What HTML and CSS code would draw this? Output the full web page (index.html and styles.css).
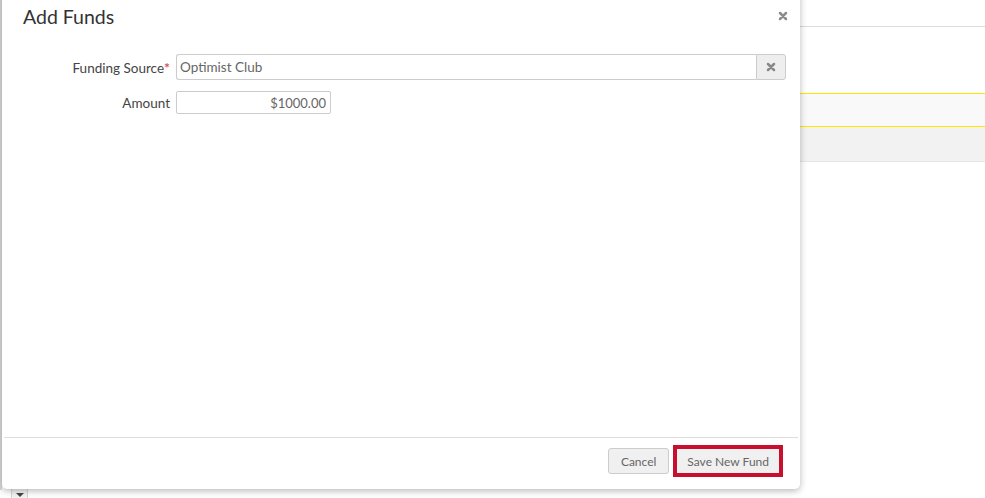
FILE: index.html
```html
<!DOCTYPE html>
<html lang="en">
<head>
    <meta charset="UTF-8">
    <title>Add Funds</title>
    <link rel="stylesheet" href="styles.css">
</head>
<body>
    <div class="backdrop">
        <div class="bar-top"></div>
        <div class="row-spacer"></div>
        <div class="row-hilite"></div>
        <div class="row-grey"></div>
    </div>
    <div class="left-strip"></div>
    <div class="pager-tab"><span class="caret"></span></div>

    <div class="modal">
        <div class="modal-header">
            <h2>Add Funds</h2>
            <svg class="close" width="10" height="10" viewBox="0 0 10 10"><path d="M2 2L8 8M8 2L2 8" stroke="#8c8c8c" stroke-width="2.5" stroke-linecap="round"/></svg>
        </div>
        <div class="modal-body">
            <div class="form-row">
                <label>Funding Source<span class="req">*</span></label>
                <div class="combo">
                    <input type="text" value="Optimist Club">
                    <button class="clear"><svg width="10" height="10" viewBox="0 0 10 10"><path d="M2 2L8 8M8 2L2 8" stroke="#888" stroke-width="2.5" stroke-linecap="round"/></svg></button>
                </div>
            </div>
            <div class="form-row">
                <label>Amount</label>
                <input class="amount" type="text" value="$1000.00">
            </div>
        </div>
        <div class="modal-footer">
            <button class="btn">Cancel</button>
            <button class="btn btn-save">Save New Fund</button>
        </div>
    </div>
</body>
</html>
```

FILE: styles.css
```css
body {
    margin: 0;
    font-family: Lato, "Open Sans", sans-serif;
    background-color: white;
    height: 498px;
    overflow: hidden;
    position: relative;
}
.backdrop {
    width: 100%;
}
.bar-top {
    height: 26px;
    border-bottom: 1px solid #dcdcdc;
}
.row-spacer {
    height: 66px;
}
.row-hilite {
    height: 32px;
    background-color: #f9f9f9;
    border-top: 1px solid #ffe600;
    border-bottom: 1px solid #ffe600;
}
.row-grey {
    height: 34px;
    background-color: #f2f2f2;
    border-bottom: 1px solid #e6e6e6;
}
.left-strip {
    position: absolute;
    left: 0;
    top: 0;
    width: 2px;
    height: 490px;
    background-color: #dadada;
}
.pager-tab {
    position: absolute;
    left: 11px;
    top: 487px;
    width: 17px;
    height: 14px;
    background-color: #f3f3f3;
    border: 1px solid #d6d6d6;
    display: flex;
    justify-content: center;
    padding-top: 3px;
    box-sizing: border-box;
}
.caret {
    width: 0;
    height: 0;
    border-left: 4px solid transparent;
    border-right: 4px solid transparent;
    border-top: 4px solid #444;
    margin-top: 2px;
}
.modal {
    position: absolute;
    left: 2px;
    top: -10px;
    width: 798px;
    height: 499px;
    background-color: white;
    border-radius: 0 0 5px 5px;
    box-shadow: 0 2px 7px rgba(0, 0, 0, 0.28);
    display: flex;
    flex-direction: column;
}
.modal-header {
    display: flex;
    align-items: center;
    justify-content: space-between;
    padding: 13px 12px 0 21px;
    height: 26px;
}
.modal-header h2 {
    margin: 0;
    font-size: 19.5px;
    font-weight: normal;
    color: #333;
}
.modal-body {
    flex: 1;
    padding-top: 25px;
}
.form-row {
    display: flex;
    align-items: center;
    margin-bottom: 11px;
}
.form-row label {
    width: 168px;
    text-align: right;
    padding-right: 6px;
    font-size: 13.5px;
    color: #444;
}
.req {
    color: #d9534f;
    font-size: 14px;
    font-weight: bold;
}
.combo {
    display: flex;
    width: 610px;
    height: 26px;
}
input {
    font-family: Lato, "Open Sans", sans-serif;
    font-size: 13px;
    color: #666;
    border: 1px solid #ccc;
    box-sizing: border-box;
    outline: none;
}
.combo input {
    flex: 1;
    height: 26px;
    padding: 0 3px;
    border-radius: 3px 0 0 3px;
    border-right: none;
    font-size: 13.5px;
}
.clear {
    width: 30px;
    height: 26px;
    background-color: #eeeeee;
    border: 1px solid #ccc;
    border-radius: 0 3px 3px 0;
    padding: 0;
    display: flex;
    align-items: center;
    justify-content: center;
}
.amount {
    width: 155px;
    height: 23px;
    text-align: right;
    padding: 0 4px;
    border-radius: 2px;
}
.modal-footer {
    margin: 0 2px;
    border-top: 1px solid #dddddd;
    display: flex;
    justify-content: flex-end;
    align-items: center;
    gap: 7px;
    padding: 10px 18px 15px 0;
}
.btn {
    height: 26px;
    padding: 0 12px;
    font-family: Lato, "Open Sans", sans-serif;
    font-size: 12px;
    color: #666;
    background-color: #f0f0f0;
    border: 1px solid #ccc;
    border-radius: 3px;
}
.btn-save {
    padding: 0 10px;
    border-radius: 0;
    outline: 3px solid #c8102e;
    outline-offset: 0;
    border-color: #c8102e;
}
```
